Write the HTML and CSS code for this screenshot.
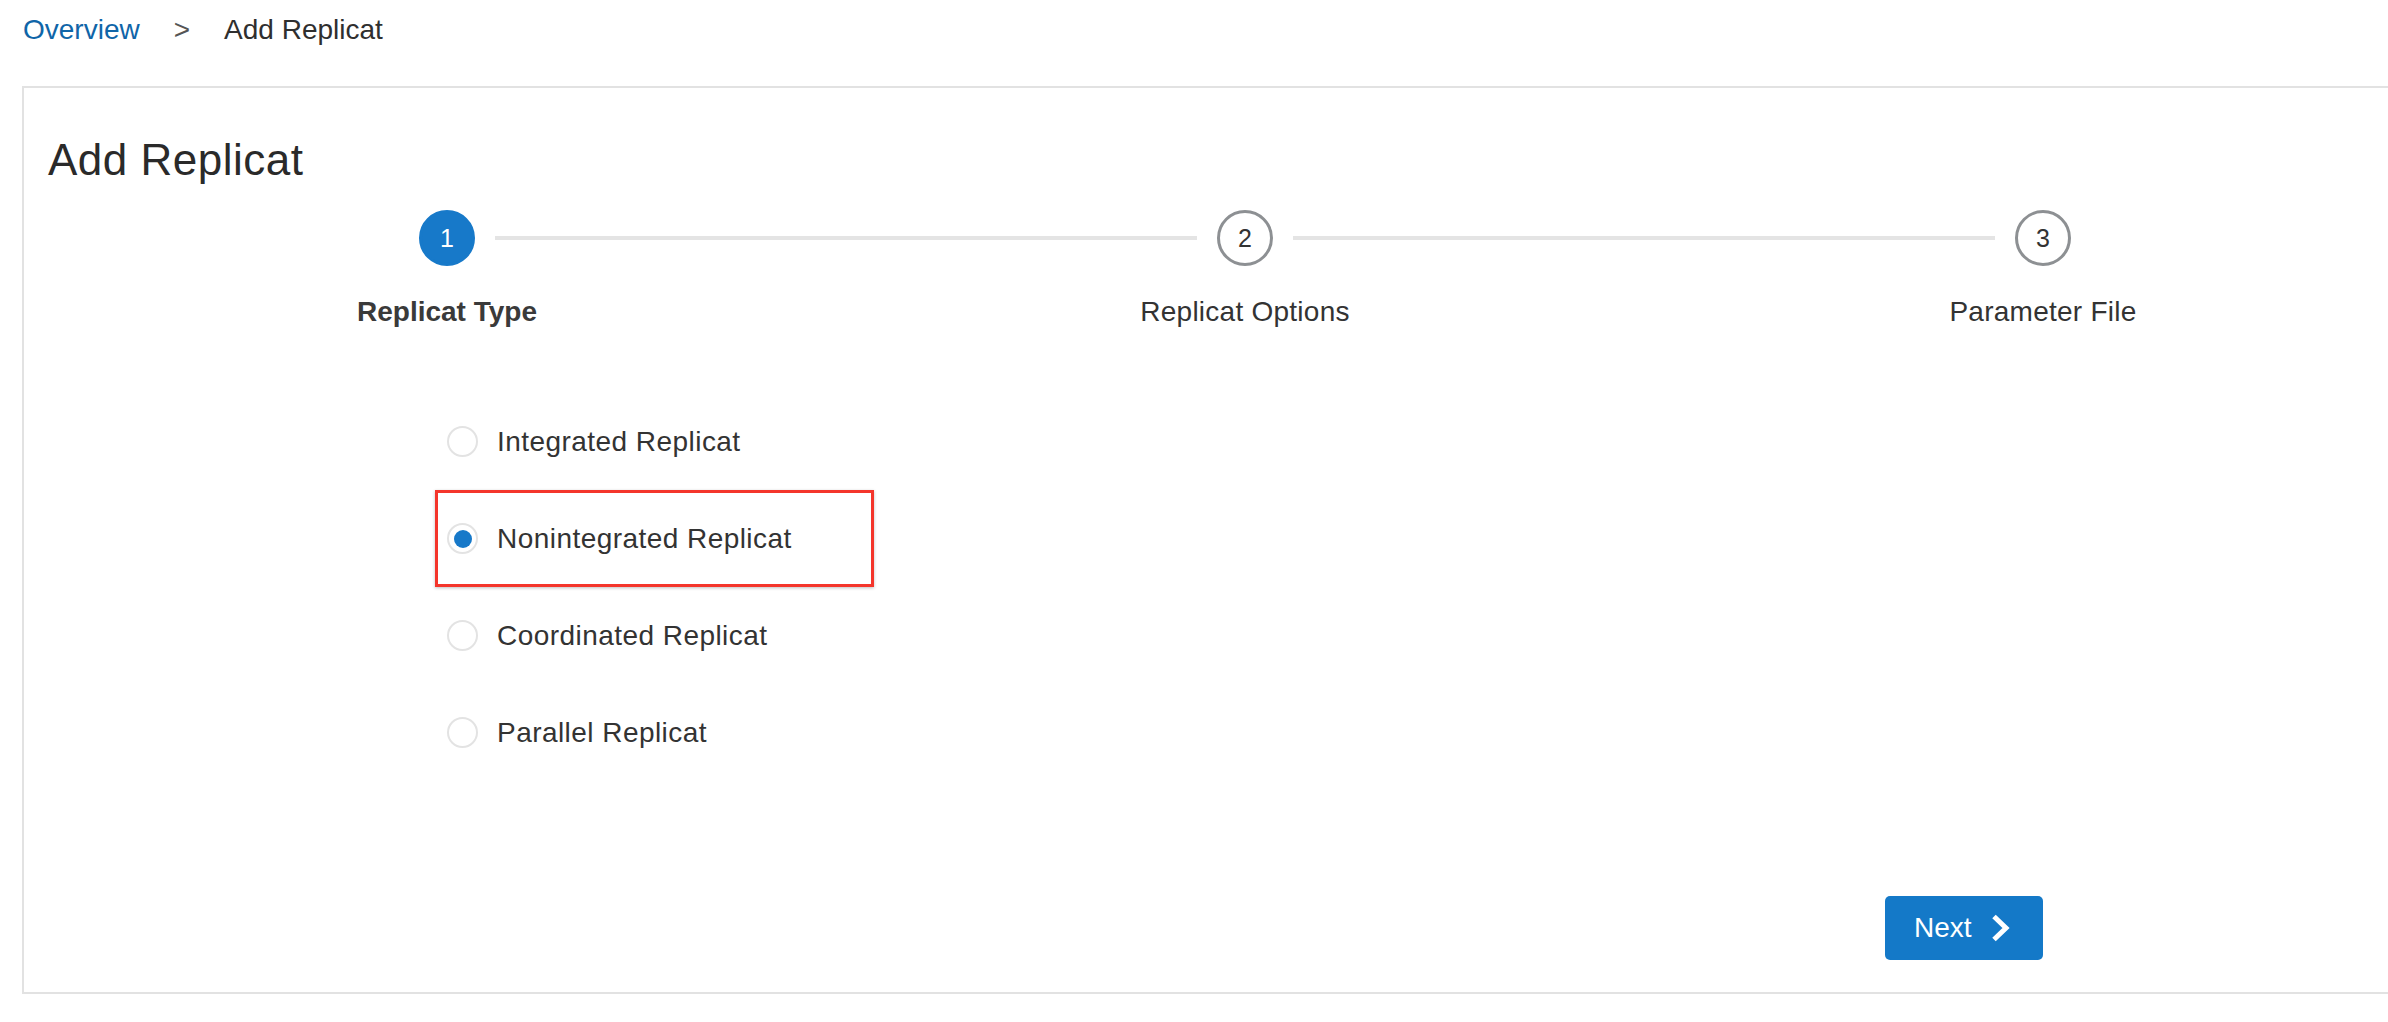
FILE: index.html
```html
<!DOCTYPE html>
<html lang="en">
<head>
<meta charset="utf-8">
<title>Add Replicat</title>
<link rel="stylesheet" href="styles.css">
</head>
<body>
<nav class="breadcrumb">
  <a class="crumb-link" href="#">Overview</a>
  <span class="crumb-sep">&gt;</span>
  <span class="crumb-current">Add Replicat</span>
</nav>
<main class="panel">
  <h1 class="title">Add Replicat</h1>
  <div class="stepper">
    <div class="step">
      <div class="track">
        <span class="line hidden"></span>
        <span class="dot active">1</span>
        <span class="line"></span>
      </div>
      <div class="step-label current">Replicat Type</div>
    </div>
    <div class="step">
      <div class="track">
        <span class="line"></span>
        <span class="dot">2</span>
        <span class="line"></span>
      </div>
      <div class="step-label">Replicat Options</div>
    </div>
    <div class="step">
      <div class="track">
        <span class="line"></span>
        <span class="dot">3</span>
        <span class="line hidden"></span>
      </div>
      <div class="step-label">Parameter File</div>
    </div>
  </div>
  <div class="options">
    <label class="option"><span class="radio"></span><span class="option-text">Integrated Replicat</span></label>
    <label class="option highlighted"><span class="radio checked"></span><span class="option-text">Nonintegrated Replicat</span></label>
    <label class="option"><span class="radio"></span><span class="option-text">Coordinated Replicat</span></label>
    <label class="option"><span class="radio"></span><span class="option-text">Parallel Replicat</span></label>
  </div>
  <div class="footer">
    <button class="next-btn" type="button">Next
      <svg class="chev" width="19" height="28" viewBox="0 0 19 28" aria-hidden="true"><path d="M3 2.5 L15 14 L3 25.5" fill="none" stroke="#fff" stroke-width="5" stroke-linejoin="miter"/></svg>
    </button>
  </div>
</main>
</body>
</html>
```
FILE: styles.css
```css
html, body {
  margin: 0;
  padding: 0;
  background: #fff;
  overflow: hidden;
}
body {
  font-family: "Liberation Sans", Arial, sans-serif;
  color: #333;
  width: 2388px;
  height: 1022px;
}
.breadcrumb {
  display: flex;
  gap: 34px;
  padding: 13px 0 0 23px;
  font-size: 28px;
  line-height: 34px;
  margin-bottom: 39px;
}
.crumb-link {
  color: #0f65a8;
  text-decoration: none;
}
.crumb-sep {
  color: #555;
}
.crumb-current {
  color: #2f2f2f;
}
.panel {
  box-sizing: border-box;
  width: 2446px;
  margin-left: 22px;
  border: 2px solid #e2e2e2;
  padding: 46px 24px 32px 24px;
}
.title {
  margin: 0;
  font-size: 44px;
  line-height: 52px;
  font-weight: normal;
  letter-spacing: 0.5px;
  color: #2a2a2a;
}
.stepper {
  display: flex;
  margin-top: 24px;
}
.step {
  width: 798px;
  display: flex;
  flex-direction: column;
  align-items: center;
}
.track {
  width: 100%;
  display: flex;
  align-items: center;
  height: 56px;
}
.line {
  flex: 1;
  height: 4px;
  background: #e4e4e4;
}
.line.hidden {
  visibility: hidden;
}
.dot {
  box-sizing: border-box;
  width: 56px;
  height: 56px;
  border-radius: 50%;
  margin: 0 20px;
  border: 3px solid #8d9093;
  background: #fff;
  color: #333;
  display: flex;
  align-items: center;
  justify-content: center;
  font-size: 25px;
}
.dot.active {
  background: #1779c9;
  border-color: #1779c9;
  color: #fff;
}
.step-label {
  margin-top: 29px;
  font-size: 28px;
  line-height: 34px;
  letter-spacing: 0.25px;
  color: #333;
}
.step-label.current {
  font-weight: bold;
  letter-spacing: 0;
  color: #3a3a3a;
}
.options {
  margin-top: 64px;
  margin-left: 387px;
  display: flex;
  flex-direction: column;
}
.option {
  box-sizing: border-box;
  width: 439px;
  height: 97px;
  display: flex;
  align-items: center;
  padding-left: 9px;
  border: 3px solid transparent;
  font-size: 28px;
  letter-spacing: 0.45px;
  color: #333;
}
.option.highlighted {
  border-color: #f4352b;
  box-shadow: 0 1px 3px rgba(0,0,0,0.25);
}
.radio {
  box-sizing: border-box;
  width: 31px;
  height: 31px;
  border-radius: 50%;
  border: 2px solid #e3e3e3;
  background: #fff;
  display: flex;
  align-items: center;
  justify-content: center;
  margin-right: 19px;
  flex: none;
}
.radio.checked::after {
  content: "";
  width: 18px;
  height: 18px;
  border-radius: 50%;
  background: #1779c9;
}
.footer {
  width: 1995px;
  display: flex;
  justify-content: flex-end;
  margin-top: 115px;
}
.next-btn {
  box-sizing: border-box;
  width: 158px;
  height: 64px;
  border: none;
  border-radius: 5px;
  background: #1479c8;
  color: #fff;
  font-family: "Liberation Sans", Arial, sans-serif;
  font-size: 28px;
  display: flex;
  align-items: center;
  padding: 0 0 0 29px;
  cursor: pointer;
}
.chev {
  margin-left: 19px;
}
```
